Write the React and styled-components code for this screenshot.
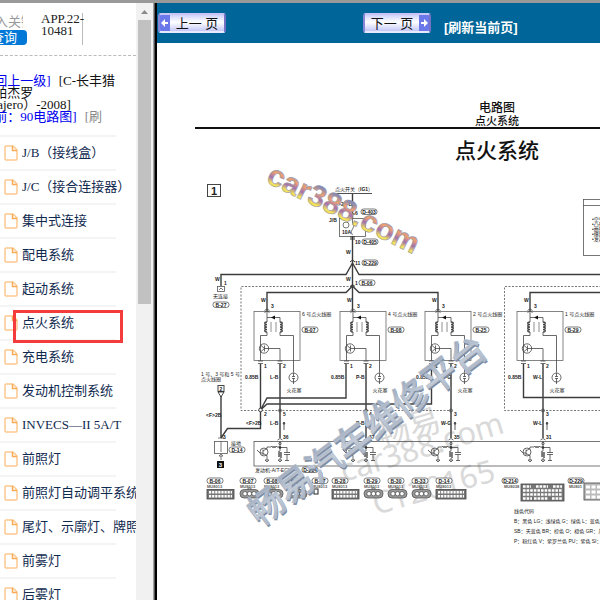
import React from 'react';
import styled, { createGlobalStyle } from 'styled-components';

const GlobalStyle = createGlobalStyle`
* {
  box-sizing: border-box;
}

body {
  margin: 0;
  background: #fff;
  font-family: "Liberation Serif", "Noto Sans CJK SC", serif;
  font-size: 13px;
}
`;

const Page = styled.div`
  height: 100vh;
  display: flex;
  overflow: hidden;
  border-top: 3px solid #999;
`;

const Sidebar = styled.aside`
  flex: none;
  width: 157px;
  display: flex;
  border-right: 2px solid #000;
  box-shadow: inset -1px 0 0 #555, inset -2px 0 0 #a0a0a0;
  padding-right: 2px;
`;

/* the tree frame is scrolled a little to the right */
const TreeFrame = styled.div`
  flex: 1;
  min-width: 0;
  overflow: hidden;
`;

const ScrollBar = styled.div`
  width: 17px;
  flex: none;
  background: #f1f1f1;
  display: flex;
  flex-direction: column;
  align-items: center;
`;

const ScrollArrow = styled.svg`
  display: block;
  flex: none;
  width: 17px;
  height: 17px;
`;

const ScrollThumb = styled.div`
  width: 13px;
  height: 284px;
  background: #c1c1c1;
`;

const SearchRow = styled.form`
  display: flex;
  height: 53px;
  padding-top: 10px;
  border-bottom: 1px dashed #bbb;
`;

const SearchBox = styled.div`
  width: 27px;
  flex: none;
  display: flex;
  flex-direction: column;
  align-items: flex-end;
`;

const SearchInput = styled.input`
  width: 45px;
  height: 17px;
  margin-right: 4px;
  padding: 0 0 0 4px;
  border: none;
  outline: none;
  background: transparent;
  font-family: inherit;
  font-size: 13px;

  &::placeholder {
    color: #999;
  }
`;

const SearchButton = styled.button`
  width: 46px;
  height: 15px;
  padding: 0;
  border: none;
  border-radius: 4px;
  background: #0078d7;
  color: #fff;
  font-family: inherit;
  font-size: 13px;
  line-height: 15px;
`;

const Version = styled.div`
  width: 42px;
  height: 32px;
  margin-left: 14px;
  border-right: 1px solid #bbb;
  color: #222;
  line-height: 12px;
  white-space: nowrap;
`;

const Crumbs = styled.nav`
  height: 79px;
  margin-left: -23px;
  padding-top: 19px;
  line-height: 12px;
  white-space: nowrap;
  color: #111;

  a {
    color: #00e;
    text-decoration: none;
  }
`;

const CrumbNext = styled.span`
  margin-left: 8px;
  color: ${(props) => (props.$muted ? '#888' : 'inherit')};
`;

const Tree = styled.ul`
  width: 116px;
  margin: 0;
  padding: 0;
  list-style: none;
`;

const TreeItem = styled.li`
  position: relative;
  height: 34px;
  border-top: 2px solid #f4f4f4;
`;

const TreeLink = styled.a`
  display: flex;
  align-items: center;
  gap: 4px;
  height: 32px;
  padding-left: 4px;
  color: #10294f;
  line-height: 16px;
  text-decoration: none;
  white-space: nowrap;
`;

const FileIcon = styled.svg`
  flex: none;
  width: 14px;
  height: 16px;
`;

const Highlight = styled.span`
  position: absolute;
  z-index: 1;
  left: 13px;
  top: 3px;
  width: 110px;
  height: 33px;
  border: 3px solid #f53c3c;
  pointer-events: none;
`;

const Main = styled.main`
  flex: 1;
  min-width: 0;
  overflow: hidden;
`;

const PageBar = styled.div`
  display: grid;
  grid-template-columns: 205px 1fr;
  height: 40px;
  padding: 10px 1px 0;
  background: #069;
`;

const PageBarCell = styled.div`
  display: flex;
  align-items: flex-start;
  gap: 13px;
`;

const PageButton = styled.button`
  display: flex;
  flex-direction: ${(props) => (props.$next ? 'row-reverse' : 'row')};
  align-items: stretch;
  width: 68px;
  height: 20px;
  padding: 0;
  border: 2px solid;
  border-color: #c9c6f5 #7470c4 #e8e8ff #8a86d8;
  border-radius: 3px;
  overflow: hidden;
  background: linear-gradient(#cfd2fb, #fff 45%, #c4c8f8);
  color: #111;
  font-family: "Liberation Sans", "Noto Sans CJK SC", sans-serif;
  font-size: 13px;
  line-height: 17px;
`;

const PageButtonText = styled.span`
  flex: 1;
  text-align: center;
`;

const PageArrow = styled.svg`
  flex: none;
  width: 10px;
  height: 16px;
  background: #6a78ea;
`;

const RefreshLink = styled.a`
  padding-top: 6px;
  color: #fff;
  font-family: "Liberation Sans", "Noto Sans CJK SC", sans-serif;
  font-weight: bold;
  line-height: 18px;
  text-decoration: none;
`;

/* scanned manual page, wider than its frame */
const Sheet = styled.article`
  width: 680px;
  padding-top: 59px;
  color: #111;
  font-family: "Liberation Sans", "Noto Sans CJK SC", sans-serif;
`;

const SheetHeader = styled.header`
  margin: 0 38px;
  border-bottom: 2px solid #111;
  text-align: center;
  font-weight: 500;
`;

const SheetChapter = styled.div`
  font-size: 12px;
  line-height: 13px;
`;

const SheetSection = styled.div`
  font-size: 11px;
  line-height: 12px;
`;

const SheetTitle = styled.h1`
  margin: 0;
  padding-top: 6px;
  text-align: center;
  font-size: 21px;
  font-weight: 500;
  line-height: 32px;
`;

const Diagram = styled.svg`
  display: block;
  width: 680px;
  height: 339px;
  overflow: visible;
  fill: #222;
  font-family: "Liberation Sans", "Noto Sans CJK SC", sans-serif;
`;

const Legend = styled.div`
  padding-left: 357px;
  color: #222;
  font-size: 5px;
  white-space: nowrap;

  p {
    margin: 0;
    line-height: 10px;
  }
`;

const items = [
  'J/B（接线盒）',
  'J/C（接合连接器）',
  '集中式连接',
  '配电系统',
  '起动系统',
  '点火系统',
  '充电系统',
  '发动机控制系统',
  'INVECS—II 5A/T',
  '前照灯',
  '前照灯自动调平系统',
  '尾灯、示廓灯、牌照灯',
  '前雾灯',
  '后雾灯',
];

const coils = [
  { x: 267, no: '6', plug: 'B-07', wire: 'L-B', pin: '5', ecu: '36' },
  { x: 353, no: '4', plug: 'B-08', wire: 'P-B', pin: '4', ecu: '67' },
  { x: 438, no: '2', plug: 'B-25', wire: 'W-G', pin: '3', ecu: '35' },
  { x: 530, no: '1', plug: 'B-29', wire: 'W-L', pin: '3', ecu: '31' },
];

const plugs = [
  { x: 207, name: 'B-06', kind: 'wide', w: 27 },
  { x: 240, name: 'B-07', kind: 'oval', w: 19 },
  { x: 264, name: 'B-08', kind: 'oval', w: 19 },
  { x: 288, name: 'B-25', kind: 'oval', w: 19 },
  { x: 312, name: 'B-27', kind: 'single', w: 4 },
  { x: 332, name: 'B-28', kind: 'wide', w: 27 },
  { x: 364, name: 'B-29', kind: 'oval', w: 19 },
  { x: 388, name: 'B-30', kind: 'oval', w: 19 },
  { x: 412, name: 'B-33', kind: 'oval', w: 19 },
  { x: 436, name: 'D-14', kind: 'wide', w: 30 },
];

const Tag = ({ x, y, children }) => (
  <g>
    <rect x={x} y={y - 3} width="16" height="5.5" rx="2.5" fill="#fff" stroke="#444" strokeWidth="0.7" />
    <text x={x + 8} y={y + 1.8} fontSize="5" fontWeight="bold" textAnchor="middle">{children}</text>
  </g>
);

const Coil = ({ x, no, plug, wire, pin, ecu }) => (
  <g>
    <g fontSize="5" fontWeight="bold">
      <text x={x - 6} y="302">W</text>
      <text x={x + 4} y="308">3</text>
      <text x={x - 3} y="368">1</text>
      <text x={x + 16} y="368">2</text>
      <text x={x - 22} y="379">0.85B</text>
      <text x={x + 3} y="379">{wire}</text>
      <text x={x + 16} y="416">{pin}</text>
      <text x={x + 3} y="425">{wire}</text>
      <text x={x + 16} y="439">{ecu}</text>
    </g>
    <text x={x + 35} y="316" fontSize="5">{no} 号点火线圈</text>
    <text x={x + 27} y="392" fontSize="5" textAnchor="middle">火花塞</text>
    <Tag x={x + 35} y={330}>{plug}</Tag>
    <g fill="none" stroke="#444" strokeWidth="0.8">
      <rect x={x - 13} y="311.5" width="46" height="49" stroke="#666" />
      <path d={`M${x} 311v11M${x} 317.5h13v5M${x} 332v3.500h-6.500v25M${x + 13} 332v3.500h13.500v37`} />
      <path d={`M${x} 322c-3 0-3 2.500 0 2.500c-3 0-3 2.500 0 2.500c-3 0-3 2.500 0 2.500c-3 0-3 2.500 0 2.500`} strokeWidth="1.300" />
      <path d={`M${x + 13} 322c3 0 3 2.500 0 2.500c3 0 3 2.500 0 2.500c3 0 3 2.500 0 2.500c3 0 3 2.500 0 2.500`} strokeWidth="1.300" />
      <path d={`M${x + 4} 322v10M${x + 9} 322v10`} strokeWidth="0.6" />
      <circle cx={x - 3} cy="348.500" r="4.700" />
      <path d={`M${x - 6.5} 345l4 3.500l-4 3.500M${x - 2.5} 345.500v6M${x - 2.5} 348.500h15.500v12`} />
      <circle cx={x + 26.5} cy="377.500" r="4.500" />
      <path d={`M${x + 26.5} 373v3.500M${x + 26.5} 378.500v5.500M${x + 25} 376.500h3M${x + 25} 378.500h3`} />
      <path d={`M${x - 2.5} 310.500q2.500-3 5 0M${x - 2.5} 312.500q2.500-3 5 0M${x - 9} 361h5M${x - 9} 363.500h5M${x + 10.5} 361h5M${x + 10.5} 363.500h5M${x + 10.5} 440q2.500-3 5 0`} />
      <circle cx={x + 13} cy="410.500" r="1.500" />
    </g>
    <path d={`M${x + 4} 317.500l4-2v4z`} fill="#111" />
    <path d={`M${x + 13} 364v74`} stroke="#444" strokeWidth="1.500" />
    <path d={`M${x + 17} 430v-8l-1 2h2l-1-2`} stroke="#333" strokeWidth="0.800" fill="none" />
    {/* driver stage inside the ECU */}
    <g fill="none" stroke="#444" strokeWidth="0.8">
      <circle cx={x - 3} cy="452" r="4" />
      <path d={`M${x - 10} 450l3 3h3M${x - 4} 449.500v5.500M${x - 4} 451l4-2.500v-1.500h4l1-1l1 2l1-2l1 2l1-2l1 1h3M${x - 4} 453.500l4 2v4.500M${x - 2} 460h4l-2 2z`} />
      <path d={`M${x + 13} 441v10l-2 1l4 1l-4 1l4 1l-4 1l4 1l-2 1v2M${x + 11} 460h4l-2 2zM${x + 13} 447.500h7v5M${x + 17} 452.500h6M${x + 17} 454.500h6M${x + 20} 454.500v6M${x + 18} 460.500h4`} />
      <circle cx={x + 13} cy="447.500" r="1" fill="#222" />
      <circle cx={x + 13} cy="443.500" r="1.200" />
    </g>
  </g>
);

const Plug = ({ x, name, kind, w }) => (
  <g>
    <Tag x={x} y={481}>{name}</Tag>
    <text x={x} y="488" fontSize="4" fontWeight="bold" fill="#555">MU8013</text>
    {kind === 'oval' && (
      <g>
        <rect x={x} y="489.500" width={w} height="8.500" rx="4" fill="#999" stroke="#555" strokeWidth="0.8" />
        <path d={`M${x + 8} 489.500v-1.500h3v1.500`} stroke="#555" fill="none" strokeWidth="0.8" />
        {[5, 9.5, 14].map((d) => (
          <circle key={d} cx={x + d} cy="493.700" r="2.200" fill="#fff" stroke="#444" strokeWidth="0.7" />
        ))}
      </g>
    )}
    {kind === 'wide' && (
      <g>
        <rect x={x} y="489.500" width={w} height="9.500" fill="#777" stroke="#444" strokeWidth="0.8" />
        <path d={`M${x + 2} 492.300h${w - 4}M${x + 2} 496.200h${w - 4}`} stroke="#fff" strokeWidth="2.500" strokeDasharray="2.200 0.900" />
      </g>
    )}
    {kind === 'single' && <rect x={x + 2} y="489" width={w} height="5" fill="#fff" stroke="#222" />}
  </g>
);

const Wiring = () => (
  <Diagram viewBox="157 167 680 339" role="img" aria-label="点火系统电路图">
    <defs>
      <linearGradient id="logo" x1="0" y1="0" x2="0" y2="1">
        <stop offset="0.200" stopColor="#7f86b8" />
        <stop offset="0.420" stopColor="#f2a070" />
        <stop offset="0.600" stopColor="#a070b0" />
        <stop offset="0.760" stopColor="#f4e25a" />
      </linearGradient>
      <linearGradient id="steel" x1="0" y1="0" x2="0" y2="1">
        <stop offset="0" stopColor="#98a6ba" />
        <stop offset="0.500" stopColor="#c3ccd8" />
        <stop offset="1" stopColor="#a3afc1" />
      </linearGradient>
    </defs>

    {/* pale watermark lies under the lines */}
    <g fill="#d9d9d9" fontFamily='"Noto Sans", "Noto Sans CJK SC", sans-serif'>
      <text fontSize="32" transform="translate(382 448) rotate(-17)">畅易</text>
      <text fontSize="31" transform="translate(344 482) rotate(-17)">car388.com</text>
      <text fontSize="31" transform="translate(376 515) rotate(-16)">CY20165</text>
    </g>

    <rect x="207.500" y="184.500" width="13" height="12" fill="none" stroke="#444" />
    <text x="214" y="195" fontSize="11" fontWeight="bold" textAnchor="middle">1</text>

    <text x="335" y="191" fontSize="5">点火开关（<tspan fontWeight="bold">IG1</tspan>）</text>
    <g fill="none" stroke="#555" strokeWidth="0.8">
      <path d="M333 193.500h39" stroke="#222" />
      <rect x="339.500" y="218.500" width="26" height="18" />
      <circle cx="346" cy="225" r="3" />
      <path d="M352.500 219v4q3 3 0 6t0 6" />
      <rect x="217.500" y="286.500" width="7" height="5" />
      <path d="M219 290l2-2l2 2" />
      <rect x="583.500" y="199.500" width="70" height="56" />
      <path d="M583 205.500h70" />
      <rect x="254" y="441.500" width="440" height="24.500" />
      <rect x="214.500" y="441.500" width="13" height="12" />
      <path d="M221 441v11M219 456l2-2l2 2zM221 456v4M218 438h6" />
    </g>
    <g fill="none" stroke="#666" strokeWidth="0.9" strokeDasharray="2 1.500">
      <path d="M352 286.500H241V410.500H451" />
      <path d="M640 286.500H504.500V410.500H640" />
    </g>

    {/* supply side */}
    <g fill="none" stroke="#3c3c3c" strokeWidth="1.400">
      <path d="M352.500 194v25M352.500 236v75" />
      <path d="M352.500 263l-6.500 11.500H221V286M352.500 263l6.500 11.500H660" />
      <path d="M352.500 286l-6.500 6.500H267V311M352.500 286l6.500 6.500H438V311M530 311V292.500H660" />
      <path d="M260.500 364V428.500H227.500L221 438M221 391V438" />
      <path d="M260.500 410l6.500-12H346V364M260.500 410l6.500-6H431.500V364M523.500 364V397.500H660" />
    </g>
    <path d="M350 262l2.500-2l2.500 2M350 286.500l2.500-2l2.500 2M350 214h5M350 237h5M350 239h5" fill="none" stroke="#333" />
    <circle cx="260.500" cy="410" r="1.800" fill="#fff" stroke="#222" strokeWidth="0.8" />

    <g fontSize="5" fontWeight="bold">
      <text x="332" y="206">&lt;F&gt;2L-B</text>
      <text x="355" y="215">6</text>
      <text x="329" y="222">J/B</text>
      <text x="342" y="234">10A</text>
      <text x="355" y="244">10</text>
      <text x="346" y="254">W</text>
      <text x="355" y="265">11</text>
      <text x="346" y="281">W</text>
      <text x="355" y="285">1</text>
      <text x="215" y="281">W</text>
      <text x="224" y="285">1</text>
      <text x="206" y="417">&lt;F&gt;2B</text>
      <text x="246" y="425">&lt;F&gt;2B</text>
      <text x="264" y="416">2</text>
      <text x="223" y="439">3</text>
    </g>
    <Tag x={361} y={212}>D-403</Tag>
    <Tag x={362} y={242}>D-405</Tag>
    <Tag x={362} y={263}>D-229</Tag>
    <Tag x={359} y={283}>B-06</Tag>
    <Tag x={213} y={305}>B-27</Tag>
    <text x="213" y="298" fontSize="5">无连接</text>

    <g fontSize="5">
      <text x="201" y="376">1 号、3 号和 5 号</text>
      <text x="201" y="381">点火线圈</text>
      <text x="231" y="445">接地</text>
      <text x="255" y="472">发动机-A/T-ECU</text>
    </g>
    <rect x="218" y="385.500" width="6" height="6" fill="#fff" stroke="#444" />
    <text x="221" y="391" fontSize="5" fontWeight="bold" textAnchor="middle">2</text>
    <path d="M218 392h6l-3 5z" fill="#fff" stroke="#222" strokeWidth="0.8" />
    <Tag x={229} y={450}>D-14</Tag>
    <Tag x={302} y={470}>D-214</Tag>
    <rect x="217" y="461" width="7" height="7" fill="#111" />
    <text x="220.500" y="467" fontSize="6" fontWeight="bold" fill="#fff" textAnchor="middle">3</text>

    <g fontSize="5">
      <text x="592" y="221">•空气流量</text>
      <text x="592" y="226">•凸轮轴</text>
      <text x="592" y="231">•曲轴位置</text>
      <text x="592" y="236">•爆震</text>
      <text x="592" y="241">•发动机</text>
    </g>

    {coils.map((coil) => <Coil key={coil.x} {...coil} />)}
    {plugs.map((plug) => <Plug key={plug.x} {...plug} />)}

    <Tag x={502} y={481}>D-214</Tag>
    <text x="504" y="488" fontSize="4" fontWeight="bold" fill="#555">MU8038</text>
    <rect x="521" y="484" width="43" height="17" fill="#777" stroke="#444" strokeWidth="0.8" />
    <path d="M523 486.500h8M536 486.500h12M553 486.500h9M523 490.500h39M523 494.500h39M523 498.500h9M534 498.500h14M552 498.500h10" stroke="#fff" strokeWidth="2.600" strokeDasharray="2.600 1" />
    <Tag x={568} y={481}>D-229</Tag>
    <text x="569" y="488" fontSize="4" fontWeight="bold" fill="#555">MU801</text>
    <rect x="584" y="483" width="40" height="17" fill="#bbb" stroke="#444" strokeWidth="0.8" />
    <path d="M586 487h36M586 492h36M586 497h36" stroke="#fff" strokeWidth="3" strokeDasharray="4 1.500" />

    <text fontSize="30" fontWeight="bold" fill="url(#logo)" stroke="#9a9aa6" strokeWidth="0.6" transform="translate(265 182) rotate(26)">car388.com</text>
    <g fontSize="36" fontWeight="500">
      <text fill="#7f8da4" transform="translate(261 529) rotate(-37)">畅易汽车维修平台</text>
      <text fill="url(#steel)" stroke="#b4bfce" strokeWidth="0.6" transform="translate(260 527) rotate(-37)">畅易汽车维修平台</text>
    </g>
  </Diagram>
);

const App = () => {
  return (
    <Page>
      <GlobalStyle />
      <Sidebar>
        <TreeFrame>
          <SearchRow onSubmit={(e) => e.preventDefault()}>
            <SearchBox>
              <SearchInput type="text" aria-label="关键字" placeholder="输入关键字" />
              <SearchButton type="submit">查询</SearchButton>
            </SearchBox>
            <Version>APP.22-<br />10481</Version>
          </SearchRow>
          <Crumbs>
            <a href="#up">[返回上一级]</a><CrumbNext>[C-长丰猎</CrumbNext><br />
            豹-帕杰罗<br />
            （Pajero）-2008]<br />
            <a href="#current">[当前：90电路图]</a><CrumbNext $muted>[刷</CrumbNext>
          </Crumbs>
          <Tree>
            {items.map((item, index) => (
              <TreeItem key={index}>
                <TreeLink href="#">
                  <FileIcon viewBox="0 0 14 16" fill="none" stroke="#fbc88f" strokeWidth="1.5">
                    <path d="M2 1h7l4 4v9a1 1 0 0 1-1 1H2a1 1 0 0 1-1-1V2a1 1 0 0 1 1-1z" />
                    <path d="M8.500 1v4.500H13" stroke="#f7ab55" />
                  </FileIcon>
                  {item}
                </TreeLink>
                {item === '点火系统' && <Highlight />}
              </TreeItem>
            ))}
          </Tree>
        </TreeFrame>
        <ScrollBar>
          <ScrollArrow viewBox="0 0 17 17"><path d="M5 11h7l-3.500-4z" fill="#8a8a8a" /></ScrollArrow>
          <ScrollThumb />
        </ScrollBar>
      </Sidebar>
      <Main>
        <PageBar>
          <PageBarCell>
            <PageButton type="button">
              <PageArrow viewBox="0 0 10 16"><path d="M1 8l4-4v3h3v2H5v3z" fill="#fff" /></PageArrow>
              <PageButtonText>上一 页</PageButtonText>
            </PageButton>
          </PageBarCell>
          <PageBarCell>
            <PageButton type="button" $next>
              <PageArrow viewBox="0 0 10 16"><path d="M9 8L5 4v3H2v2h3v3z" fill="#fff" /></PageArrow>
              <PageButtonText>下一 页</PageButtonText>
            </PageButton>
            <RefreshLink href="#refresh">[刷新当前页]</RefreshLink>
          </PageBarCell>
        </PageBar>
        <Sheet>
          <SheetHeader>
            <SheetChapter>电路图</SheetChapter>
            <SheetSection>点火系统</SheetSection>
          </SheetHeader>
          <SheetTitle>点火系统</SheetTitle>
          <Wiring />
          <Legend>
            <p>线色代码</p>
            <p>B：黑色 LG：浅绿色 G：绿色 L：蓝色 W：白色 Y：黄色</p>
            <p>SB：天蓝色 BR：棕色 O：橙色 GR：灰色 R：红色</p>
            <p>P：粉红色 V：紫罗兰色 PU：紫色 SI：银色</p>
          </Legend>
        </Sheet>
      </Main>
    </Page>
  );
};

export default App;
